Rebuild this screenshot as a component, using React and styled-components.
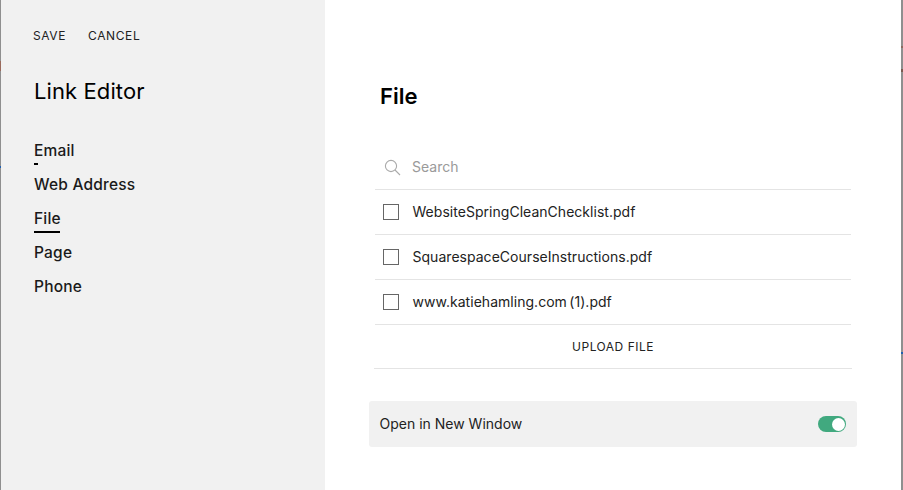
import React from "react";
import styled, { createGlobalStyle } from "styled-components";

const Global = createGlobalStyle`
  html, body { margin: 0; padding: 0; background: #fff; }
  body { font-family: Inter, "Liberation Sans", sans-serif; color: #1a1a1a; }
  * { box-sizing: border-box; }
`;
const Page = styled.div`
  display: flex;
  width: 903px;
  height: 490px;
  overflow: hidden;
`;
const LeftEdge = styled.div`
  flex: none;
  width: 1px;
  background: linear-gradient(
    to bottom,
    #8f8f8f 61px,
    #9a6a5c 61px,
    #9a6a5c 71px,
    #8f8f8f 71px,
    #8f8f8f 166px,
    #1f5fb0 166px,
    #1f5fb0 168px,
    #8f8f8f 168px
  );
`;
const RightEdge = styled.div`
  flex: none;
  width: 2px;
  background: linear-gradient(
    to bottom,
    #8f8f8f 46px,
    #8a6a60 46px,
    #8a6a60 48px,
    #8f8f8f 48px,
    #8f8f8f 69px,
    #7a5a50 69px,
    #7a5a50 72px,
    #8f8f8f 72px,
    #8f8f8f 352px,
    #1f5fb0 352px,
    #1f5fb0 354px,
    #8f8f8f 354px
  );
`;
const Sidebar = styled.aside`
  flex: none;
  width: 324px;
  background: #f1f1f1;
  padding: 28px 0 0 33px;
`;
const Actions = styled.div`
  display: flex;
  gap: 22px;
  margin-left: -1px;
`;
const ActionButton = styled.span`
  font-size: 12px;
  line-height: 15px;
  letter-spacing: 0.6px;
  color: #222;
`;
const Title = styled.h1`
  margin: 34px 0 0;
  font-size: 22px;
  line-height: 28px;
  font-weight: 400;
  letter-spacing: 0.1px;
  color: #000;
`;
const Nav = styled.nav`
  display: flex;
  flex-direction: column;
  align-items: flex-start;
  margin-top: 36px;
`;
const NavItem = styled.a`
  position: relative;
  height: 34px;
  font-size: 15.5px;
  line-height: 20px;
  font-weight: 500;
  letter-spacing: 0.2px;
  color: #1a1a1a;
  &::after {
    content: "";
    display: ${(p) => (p.$bar ? "block" : "none")};
    position: absolute;
    left: 0;
    top: 22px;
    height: 2px;
    width: ${(p) => p.$bar};
    background: #000;
  }
`;
const Main = styled.main`
  flex: 1;
  background: #fff;
  padding: 83px 0 0 44px;
`;
const Heading = styled.h2`
  margin: 0 0 0 11px;
  font-size: 22px;
  line-height: 26px;
  font-weight: 600;
  color: #000;
`;
const List = styled.div`
  width: 476px;
  margin: 36px 0 0 6px;
`;
const SearchRow = styled.div`
  display: flex;
  align-items: center;
  height: 45px;
  padding-left: 9px;
  gap: 11px;
  border-bottom: 1px solid #e4e4e4;
  font-size: 14px;
  color: #9a9a9a;
`;
const FileRow = styled.div`
  display: flex;
  align-items: center;
  height: 45px;
  padding-left: 8px;
  gap: 13.5px;
  border-bottom: 1px solid #e4e4e4;
  font-size: 14px;
  letter-spacing: 0.03px;
  word-spacing: -1.5px;
  color: #222;
`;
const RaisedLabel = styled.span`
  margin-bottom: 2px;
`;
const Check = styled.span`
  width: 16px;
  height: 16px;
  border: 1px solid #666;
  background: #fff;
`;
const Upload = styled.div`
  height: 44px;
  width: 478px;
  margin-left: -1px;
  display: flex;
  align-items: center;
  justify-content: center;
  border-bottom: 1px solid #e4e4e4;
  font-size: 12px;
  letter-spacing: 0.5px;
  color: #222;
`;
const ToggleRow = styled.div`
  display: flex;
  align-items: center;
  justify-content: space-between;
  width: 488px;
  height: 46px;
  margin-top: 32px;
  margin-left: -6px;
  padding: 0 11px 0 10.5px;
  background: #f1f1f1;
  border-radius: 3px;
  font-size: 14px;
  color: #222;
`;
const Toggle = styled.span`
  display: flex;
  justify-content: flex-end;
  align-items: center;
  width: 28px;
  height: 16px;
  padding: 1px 1.5px;
  border-radius: 8px;
  background: #41a97f;
`;
const Knob = styled.span`
  width: 13px;
  height: 13px;
  border-radius: 50%;
  background: #fff;
`;

const files = [
  "WebsiteSpringCleanChecklist.pdf",
  "SquarespaceCourseInstructions.pdf",
  "www.katiehamling.com (1).pdf",
];

export default function App() {
  return (
    <Page>
      <Global />
      <LeftEdge />
      <Sidebar>
        <Actions>
          <ActionButton>SAVE</ActionButton>
          <ActionButton>CANCEL</ActionButton>
        </Actions>
        <Title>Link Editor</Title>
        <Nav>
          <NavItem $bar="4px">Email</NavItem>
          <NavItem>Web Address</NavItem>
          <NavItem $bar="26px">File</NavItem>
          <NavItem>Page</NavItem>
          <NavItem>Phone</NavItem>
        </Nav>
      </Sidebar>
      <Main>
        <Heading>File</Heading>
        <List>
          <SearchRow>
            <svg width="17" height="17" viewBox="0 0 17 17" fill="none" stroke="#aaa" strokeWidth="1.1">
              <circle cx="7" cy="7" r="5.6" />
              <path d="M11 11l5 5" />
            </svg>
            <RaisedLabel>Search</RaisedLabel>
          </SearchRow>
          {files.map((f) => (
            <FileRow key={f}>
              <Check />
              <RaisedLabel>{f}</RaisedLabel>
            </FileRow>
          ))}
          <Upload>UPLOAD FILE</Upload>
          <ToggleRow>
            <RaisedLabel>Open in New Window</RaisedLabel>
            <Toggle>
              <Knob />
            </Toggle>
          </ToggleRow>
        </List>
      </Main>
      <RightEdge />
    </Page>
  );
}
